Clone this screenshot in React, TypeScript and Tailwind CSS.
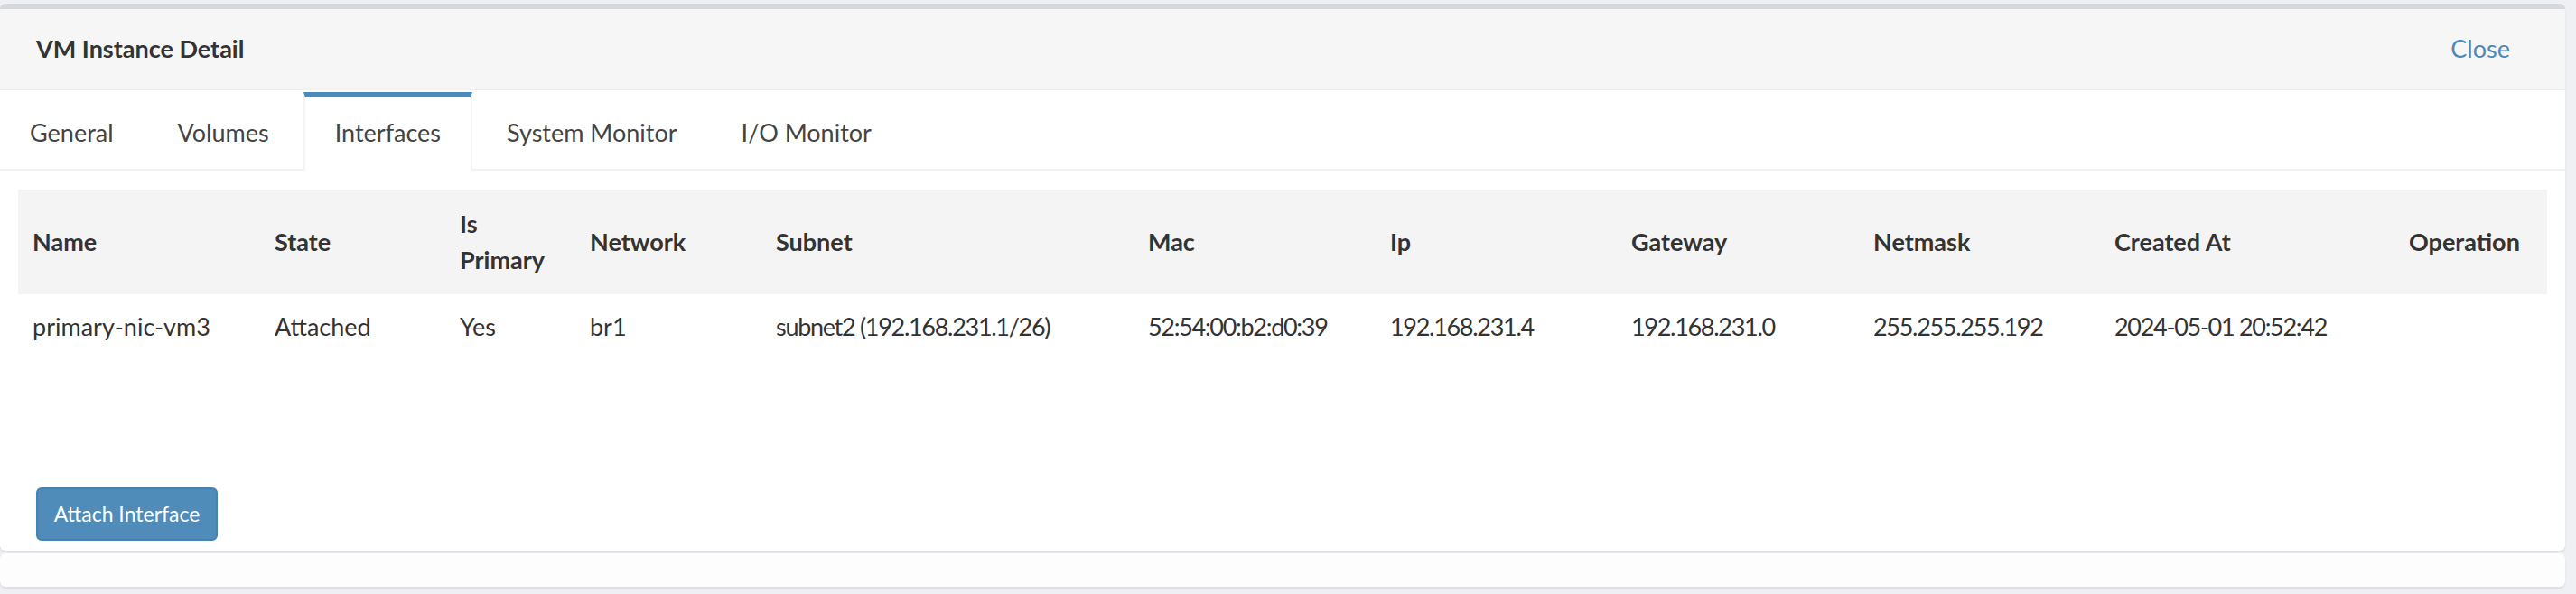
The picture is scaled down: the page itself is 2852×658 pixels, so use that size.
import React from 'react';

const font = { fontFamily: 'Lato, "Noto Sans", sans-serif' };

// numeric columns get tighter tracking (reference font has narrow digits)
const columns = [
  { key: 'name', label: 'Name', width: 'w-[268px]', num: false },
  { key: 'state', label: 'State', width: 'w-[205px]', num: false },
  { key: 'primary', label: 'Is Primary', width: 'w-[144px]', num: false },
  { key: 'network', label: 'Network', width: 'w-[206px]', num: false },
  { key: 'subnet', label: 'Subnet', width: 'w-[412px]', num: true },
  { key: 'mac', label: 'Mac', width: 'w-[268px]', num: true },
  { key: 'ip', label: 'Ip', width: 'w-[267px]', num: true },
  { key: 'gateway', label: 'Gateway', width: 'w-[268px]', num: true },
  { key: 'netmask', label: 'Netmask', width: 'w-[267px]', num: true },
  { key: 'created', label: 'Created At', width: 'w-[326px]', num: true },
  { key: 'operation', label: 'Operation', width: 'w-[169px]', num: false },
];

const rows: Record<string, string>[] = [
  {
    name: 'primary-nic-vm3',
    state: 'Attached',
    primary: 'Yes',
    network: 'br1',
    subnet: 'subnet2 (192.168.231.1/26)',
    mac: '52:54:00:b2:d0:39',
    ip: '192.168.231.4',
    gateway: '192.168.231.0',
    netmask: '255.255.255.192',
    created: '2024-05-01 20:52:42',
    operation: '',
  },
];

const tabs = ['General', 'Volumes', 'Interfaces', 'System Monitor', 'I/O Monitor'];

export default function App() {
  const [activeTab, setActiveTab] = React.useState('Interfaces');

  return (
    <div className="min-h-[658px] bg-[#eef0f4] pt-[4px]" style={font}>
      <div className="w-[2840px]">
        {/* Detail box */}
        <div className="rounded-[6px] border-t-[6px] border-[#d5d8dd] bg-white shadow-[0_2px_2px_rgba(0,0,0,0.08)]">
          {/* Header */}
          <div className="flex h-[90px] items-center justify-between border-b border-[#efefef] bg-[#f6f6f6] pl-[40px] pr-[61px]">
            <h3 className="text-[27px] font-bold text-[#333]">VM Instance Detail</h3>
            <a className="cursor-pointer text-[27px] text-[#4c8bb9]">Close</a>
          </div>

          {/* Tabs */}
          <nav className="flex h-[89px] items-end border-b-2 border-[#f2f2f2]">
            {tabs.map((tab) => (
              <button
                key={tab}
                onClick={() => setActiveTab(tab)}
                className={`-mb-[2px] mr-[5px] flex h-[87px] items-center border-t-[6px] px-[33px] pb-[2px] text-[27px] text-[#444] ${
                  activeTab === tab
                    ? 'border-x-2 border-t-[#4c8bb9] border-x-[#f4f4f4] bg-white'
                    : 'border-t-transparent'
                }`}
              >
                {tab}
              </button>
            ))}
          </nav>

          {/* Interfaces */}
          <div className="px-[20px] pb-[11px] pt-[21px]">
            <table className="w-[2800px] table-fixed border-collapse text-left text-[27px] leading-[40px] text-[#333]">
              <colgroup>
                {columns.map((c) => (
                  <col key={c.key} className={c.width} />
                ))}
              </colgroup>
              <thead>
                <tr className="bg-[#f4f4f4]">
                  {columns.map((c) => (
                    <th key={c.key} className="px-[16px] py-[18px] align-middle font-bold">
                      {c.key === 'primary' ? (
                        <>
                          Is
                          <br />
                          Primary
                        </>
                      ) : (
                        c.label
                      )}
                    </th>
                  ))}
                </tr>
              </thead>
              <tbody>
                {rows.map((r) => (
                  <tr key={r.name}>
                    {columns.map((c) => (
                      <td
                        key={c.key}
                        className={`whitespace-nowrap px-[16px] py-[16px] align-middle ${c.num ? 'tracking-[-1.3px]' : ''}`}
                      >
                        {r[c.key]}
                      </td>
                    ))}
                  </tr>
                ))}
              </tbody>
            </table>

            <div className="mt-[142px] pl-[20px]">
              <button className="h-[59px] w-[201px] rounded-[6px] border-2 border-[#4683b0] bg-[#4f8cba] text-[23px] text-white">
                Attach Interface
              </button>
            </div>
          </div>
        </div>

        {/* Footer strip */}
        <div className="mt-[3px] h-[37px] rounded-[6px] bg-[#fdfdfd] shadow-[0_2px_2px_rgba(0,0,0,0.08)]" />
      </div>
    </div>
  );
}
